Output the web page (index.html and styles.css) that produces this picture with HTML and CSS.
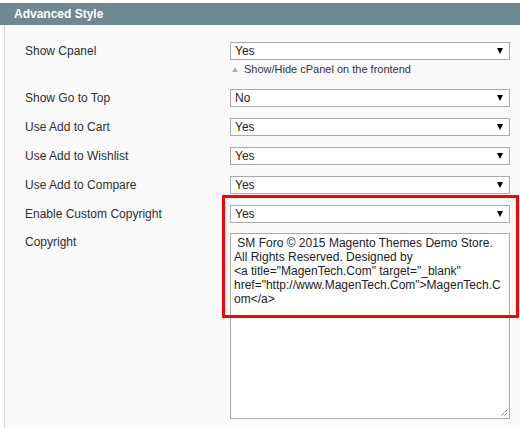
FILE: index.html
```html
<!DOCTYPE html>
<html>
<head>
<meta charset="utf-8">
<link rel="stylesheet" href="styles.css">
</head>
<body>
<div class="fieldset">
  <div class="head">Advanced Style</div>
  <div class="content">
    <div class="row first">
      <div class="label">Show Cpanel</div>
      <div class="value">
        <div class="select"><span>Yes</span><i class="arrow"></i></div>
        <div class="hint"><i class="up"></i>Show/Hide cPanel on the frontend</div>
      </div>
    </div>
    <div class="row">
      <div class="label">Show Go to Top</div>
      <div class="value"><div class="select"><span>No</span><i class="arrow"></i></div></div>
    </div>
    <div class="row">
      <div class="label">Use Add to Cart</div>
      <div class="value"><div class="select"><span>Yes</span><i class="arrow"></i></div></div>
    </div>
    <div class="row">
      <div class="label">Use Add to Wishlist</div>
      <div class="value"><div class="select"><span>Yes</span><i class="arrow"></i></div></div>
    </div>
    <div class="row">
      <div class="label">Use Add to Compare</div>
      <div class="value"><div class="select"><span>Yes</span><i class="arrow"></i></div></div>
    </div>
    <div class="row tight">
      <div class="label">Enable Custom Copyright</div>
      <div class="value"><div class="select"><span>Yes</span><i class="arrow"></i></div></div>
    </div>
    <div class="row last">
      <div class="label">Copyright</div>
      <div class="value">
        <div class="textarea"> SM Foro © 2015 Magento Themes Demo Store.
All Rights Reserved. Designed by
&lt;a title="MagenTech.Com" target="_blank"
href="http://www.MagenTech.Com"&gt;MagenTech.C
om&lt;/a&gt;<svg class="grip" width="8" height="8" viewBox="0 0 8 8"><path d="M7 1 L1 7 M7 4 L4 7" stroke="#555" stroke-width="1" stroke-dasharray="1 1" fill="none"/></svg></div>
      </div>
    </div>
  </div>
</div>
<div class="highlight"></div>
</body>
</html>
```
FILE: styles.css
```css
html, body {
  margin: 0;
  padding: 0;
  background: #ffffff;
}
body {
  font-family: "Liberation Sans", Arial, sans-serif;
  color: #333;
  position: relative;
  width: 520px;
  height: 428px;
  overflow: hidden;
}
.fieldset {
  padding-top: 3px;
}
.head {
  height: 22px;
  line-height: 22px;
  background: #6f8992;
  color: #fff;
  font-weight: bold;
  font-size: 12px;
  padding-left: 14px;
}
.content {
  box-sizing: border-box;
  margin-left: 4px;
  border-left: 1px solid #d0d0d0;
  background: #fafafa;
  padding: 17px 0 0 20px;
  height: 403px;
}
.row {
  display: flex;
  margin-bottom: 11px;
}
.row.tight {
  margin-bottom: 10px;
}
.row.last {
  margin-bottom: 0;
}
.label {
  width: 205px;
  font-size: 12px;
  line-height: 18px;
  color: #2e2e2e;
}
.value {
  width: 280px;
}
.select {
  box-sizing: border-box;
  height: 18px;
  border: 1px solid #aaa;
  background: #fff;
  display: flex;
  align-items: center;
  justify-content: space-between;
  padding: 0 6px 0 4px;
  font-size: 12px;
  color: #222;
}
.arrow {
  width: 0;
  height: 0;
  border-left: 3px solid transparent;
  border-right: 3px solid transparent;
  border-top: 6px solid #000;
}
.hint {
  margin-top: 3px;
  margin-bottom: 2px;
  height: 13px;
  line-height: 13px;
  font-size: 11px;
  color: #333;
  display: flex;
  align-items: center;
}
.up {
  width: 0;
  height: 0;
  margin-left: 2px;
  margin-right: 6px;
  border-left: 3px solid transparent;
  border-right: 3px solid transparent;
  border-bottom: 5px solid #b0b0b0;
}
.textarea {
  position: relative;
  box-sizing: border-box;
  height: 186px;
  border: 1px solid #aaa;
  background: #fff;
  padding: 2px 2px 2px 3px;
  font-size: 12px;
  line-height: 14px;
  color: #222;
  white-space: pre;
}
.grip {
  position: absolute;
  right: 1px;
  bottom: 1px;
}
.highlight {
  position: absolute;
  left: 222px;
  top: 195px;
  width: 297px;
  height: 123px;
  box-sizing: border-box;
  border: 3px solid #ff0000;
}
```
